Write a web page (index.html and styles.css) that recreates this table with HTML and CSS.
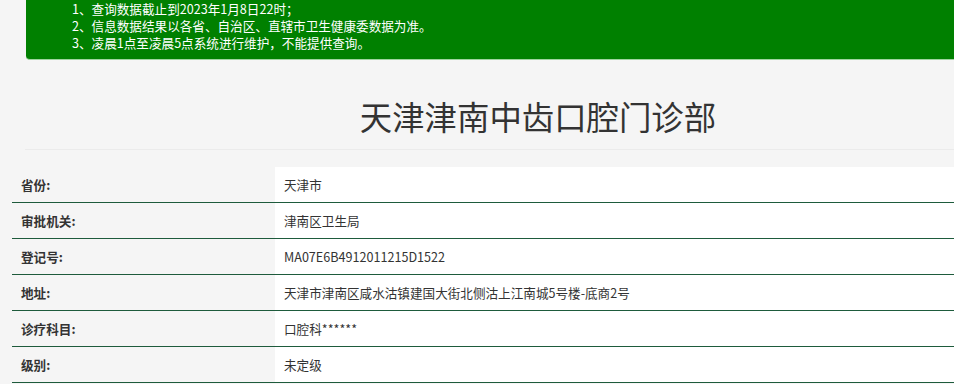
FILE: index.html
```html
<!DOCTYPE html>
<html lang="zh-CN">
<head>
<meta charset="utf-8">
<title>天津津南中齿口腔门诊部</title>
<link rel="stylesheet" href="styles.css">
</head>
<body>
<div class="page">
  <div class="notice">
    <p>1、查询数据截止到2023年1月8日22时；</p>
    <p>2、信息数据结果以各省、自治区、直辖市卫生健康委数据为准。</p>
    <p>3、凌晨1点至凌晨5点系统进行维护，不能提供查询。</p>
  </div>
  <h1 class="title">天津津南中齿口腔门诊部</h1>
  <div class="info">
    <div class="row"><div class="label">省份:</div><div class="value">天津市</div></div>
    <div class="row"><div class="label">审批机关:</div><div class="value">津南区卫生局</div></div>
    <div class="row"><div class="label">登记号:</div><div class="value">MA07E6B4912011215D1522</div></div>
    <div class="row"><div class="label">地址:</div><div class="value">天津市津南区咸水沽镇建国大街北侧沽上江南城5号楼-底商2号</div></div>
    <div class="row"><div class="label">诊疗科目:</div><div class="value">口腔科******</div></div>
    <div class="row"><div class="label">级别:</div><div class="value">未定级</div></div>
  </div>
</div>
</body>
</html>
```
FILE: styles.css
```css
html, body {
  margin: 0;
  padding: 0;
  overflow: hidden;
  background: #f5f5f5;
}
body {
  font-family: "Microsoft YaHei", "Noto Sans CJK SC", "Noto Sans", sans-serif;
  color: #333;
}
.page {
  width: 1100px;
}
.notice {
  margin-left: 26px;
  background: #008000;
  color: #fff;
  padding: 0 0 8px 46px;
  border-bottom: 1px solid #9fd49f;
  border-bottom-left-radius: 4px;
  font-size: 12.6px;
  line-height: 17px;
}
.notice p {
  margin: 0;
}
.title {
  margin: 0 0 0 25px;
  width: 1026px;
  text-align: center;
  font-size: 32.4px;
  font-weight: normal;
  line-height: 40px;
  padding: 36px 0 13px;
  border-bottom: 1px solid #ebebeb;
  color: #333;
}
.info {
  margin: 17px 0 0 12px;
  font-size: 12.6px;
}
.row {
  display: flex;
  height: 35px;
  align-items: stretch;
  border-bottom: 1px solid #1e5b3c;
}
.label {
  width: 254px;
  padding-left: 9px;
  font-weight: bold;
  display: flex;
  align-items: center;
  background: #f5f5f5;
}
.value {
  flex: 1;
  padding-left: 9px;
  background: #fff;
  display: flex;
  align-items: center;
}
```
